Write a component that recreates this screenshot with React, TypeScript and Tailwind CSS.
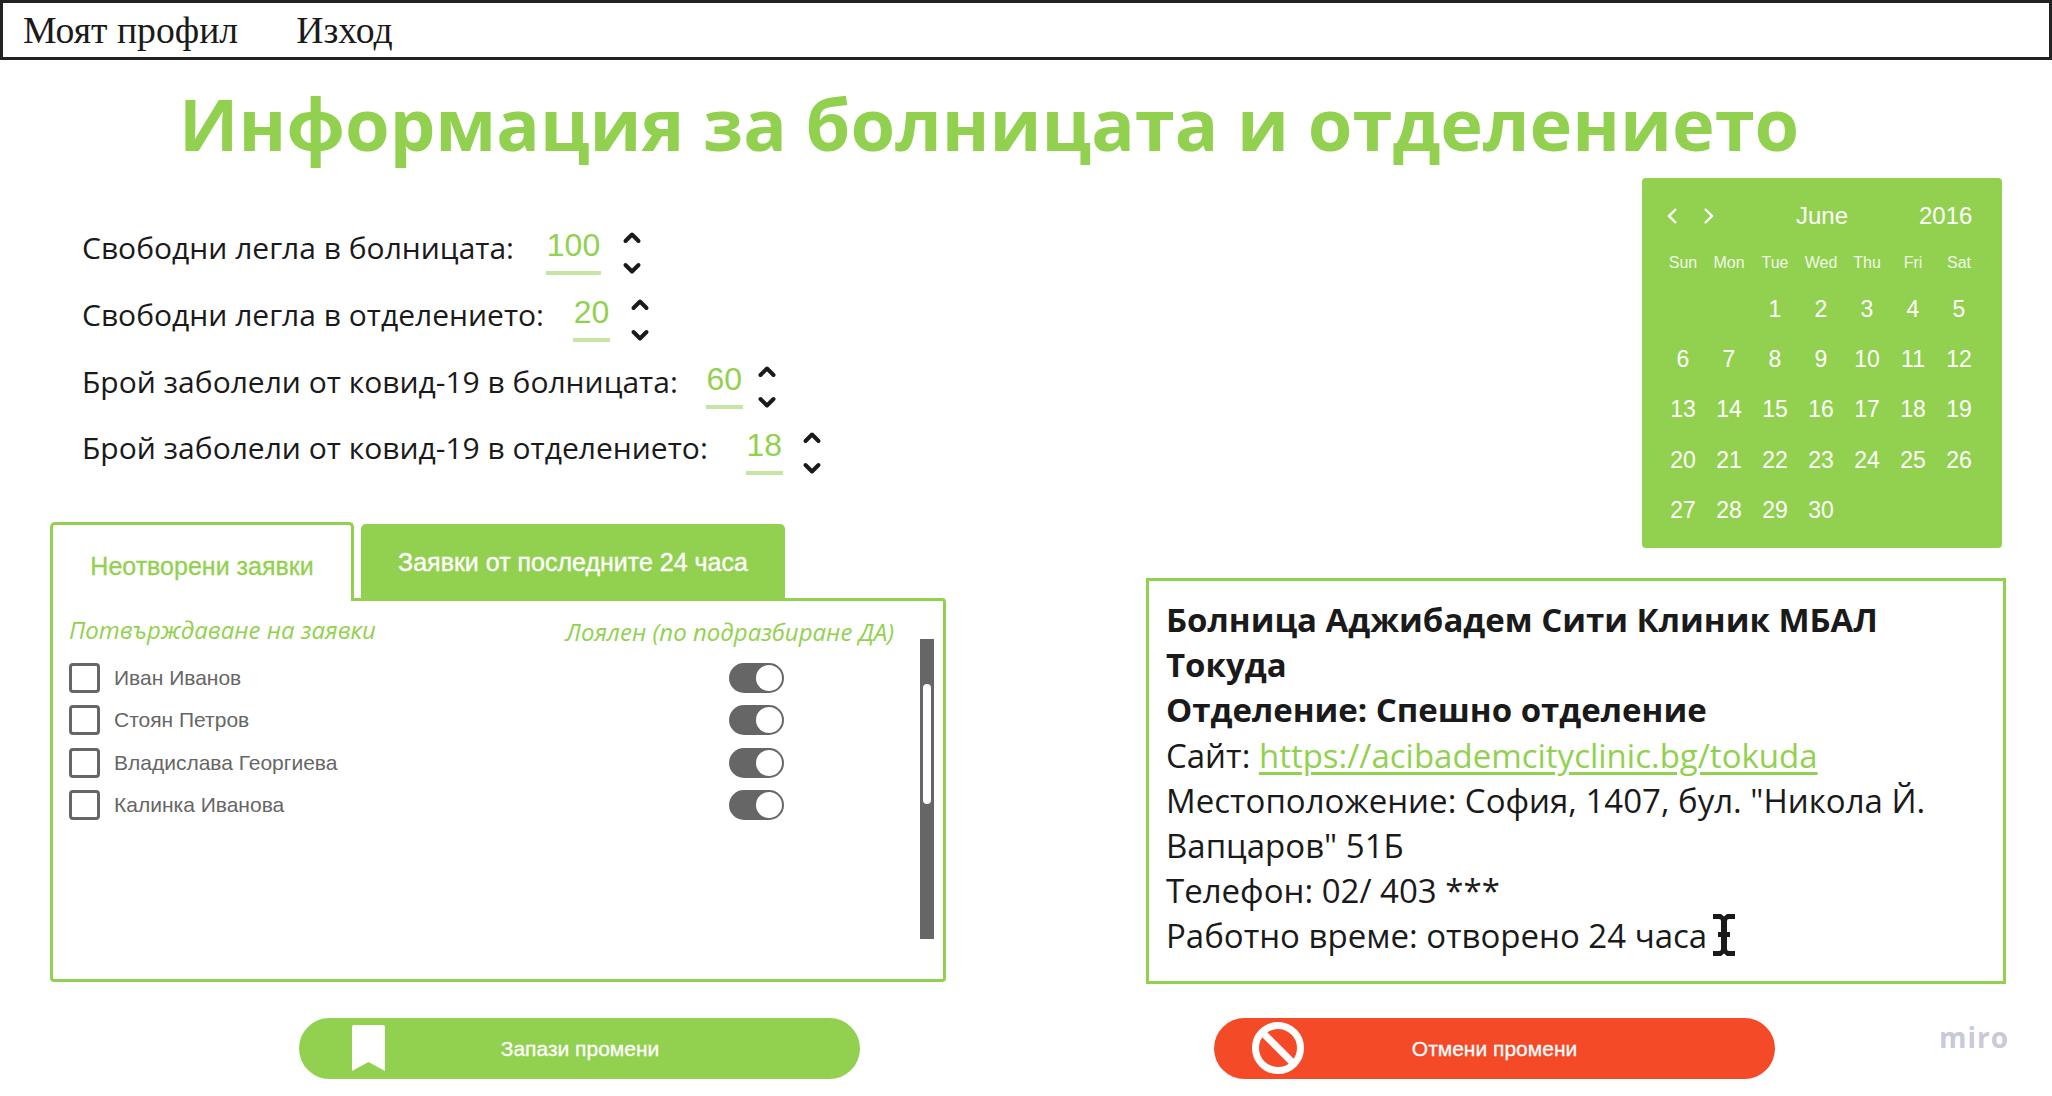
import React from "react";

const rows = [
  { label: "Свободни легла в болницата:", value: "100", rowCls: "h-[66px]", valCls: "ml-[32px] w-[55px]", chevCls: "ml-[21px]" },
  { label: "Свободни легла в отделението:", value: "20", rowCls: "h-[68px]", valCls: "ml-[29px] w-[37px]", chevCls: "ml-[20px]" },
  { label: "Брой заболели от ковид-19 в болницата:", value: "60", rowCls: "h-[66px]", valCls: "ml-[28px] w-[37px]", chevCls: "ml-[14px]" },
  { label: "Брой заболели от ковид-19 в отделението:", value: "18", rowCls: "h-[66px]", valCls: "ml-[38px] w-[37px]", chevCls: "ml-[19px]" },
];

const people = [
  { name: "Иван Иванов", cls: "h-[42px]" },
  { name: "Стоян Петров", cls: "h-[42px]" },
  { name: "Владислава Георгиева", cls: "h-[43px]" },
  { name: "Калинка Иванова", cls: "h-[42px]" },
];

const cal = [
  ["", "", "1", "2", "3", "4", "5"],
  ["6", "7", "8", "9", "10", "11", "12"],
  ["13", "14", "15", "16", "17", "18", "19"],
  ["20", "21", "22", "23", "24", "25", "26"],
  ["27", "28", "29", "30", "", "", ""],
];

function Stepper() {
  return (
    <div className="flex flex-col gap-[18px]">
      <svg width="20" height="13" viewBox="0 0 20 13" fill="none" stroke="#1a1a1a" strokeWidth="4" strokeLinecap="round" strokeLinejoin="round">
        <path d="M3.5 10 L10 3.5 L16.5 10" />
      </svg>
      <svg width="20" height="13" viewBox="0 0 20 13" fill="none" stroke="#1a1a1a" strokeWidth="4" strokeLinecap="round" strokeLinejoin="round">
        <path d="M3.5 3 L10 9.5 L16.5 3" />
      </svg>
    </div>
  );
}

function Calendar() {
  return (
    <div className="w-[360px] h-[370px] bg-[#92d14f] rounded-[4px] mr-[3px] px-[18px] pt-[20px] text-white font-['Liberation_Sans',sans-serif]">
      <div className="flex items-center h-[36px] text-[24px] pl-[5px]">
        <svg width="14" height="20" viewBox="0 0 14 20" fill="none" stroke="white" strokeWidth="2.4" className="mr-[23px]"><path d="M11 3 L4 10 L11 17" /></svg>
        <svg width="14" height="20" viewBox="0 0 14 20" fill="none" stroke="white" strokeWidth="2.4"><path d="M3 3 L10 10 L3 17" /></svg>
        <span className="ml-[76px] w-[60px] text-center">June</span>
        <span className="ml-[67px]">2016</span>
      </div>
      <div className="grid grid-cols-[repeat(7,46px)] mt-[10px] h-[38px] items-center text-center text-[16px] text-[#f0f8e6]">
        {["Sun", "Mon", "Tue", "Wed", "Thu", "Fri", "Sat"].map((d) => <span key={d}>{d}</span>)}
      </div>
      <div className="grid grid-cols-[repeat(7,46px)] auto-rows-[50.25px] items-center text-center text-[23px] mt-[2px]">
        {cal.flat().map((d, i) => <span key={i}>{d}</span>)}
      </div>
    </div>
  );
}

function Tabs() {
  return (
    <div className="w-[896px] h-[460px] flex flex-col font-['Liberation_Sans',sans-serif]">
      <div className="flex items-end h-[79px] relative z-10">
        <div className="w-[304px] h-[79px] border-[3px] border-b-0 border-[#92d14f] rounded-t-[5px] bg-white text-[#92d14f] text-[25px] font-medium flex items-center justify-center pt-[7px] [-webkit-text-stroke:0.3px_#92d14f]">
          Неотворени заявки
        </div>
        <div className="ml-[7px] w-[424px] h-[77px] bg-[#92d14f] text-white text-[25px] rounded-t-[5px] flex items-start justify-center pt-[20px] [-webkit-text-stroke:0.4px_white]">
          Заявки от последните 24 часа
        </div>
      </div>
      <div className="flex-1 -mt-[3px] border-[3px] border-[#92d14f] rounded-[4px] rounded-tl-none pl-[16px] pr-[9px] flex">
        <div className="flex-1">
          <div className="flex justify-between pt-[12px] h-[53px] pr-[26px] font-['Open_Sans',sans-serif] italic text-[24px] text-[#92d14f]">
            <span className="-mt-px">Потвърждаване на заявки</span>
            <span className="mt-px">Лоялен (по подразбиране ДА)</span>
          </div>
          <div className="pt-[3px]">
            {people.map((p) => (
              <div key={p.name} className={`flex items-center ${p.cls}`}>
                <div className="w-[31px] h-[30px] rounded-[4px] border-[3px] border-[#666666] bg-white" />
                <span className="ml-[14px] text-[21px] text-[#666666] w-[615px]">{p.name}</span>
                <div className="w-[55px] h-[30px] rounded-full bg-[#666666] flex items-center justify-end pr-[2px]">
                  <div className="w-[26px] h-[26px] rounded-full bg-white" />
                </div>
              </div>
            ))}
          </div>
        </div>
        <div className="w-[14px] h-[300px] mt-[38px] bg-[#666666] flex justify-center pt-[45px] shrink-0">
          <div className="w-[8px] h-[120px] rounded-full bg-white" />
        </div>
      </div>
    </div>
  );
}

function InfoBox() {
  return (
    <div className="relative w-[860px] h-[406px] mt-[30px] -mr-[1px] border-[3px] border-[#92d14f] pl-[17px] pt-[16px] font-['Open_Sans',sans-serif] text-[33px] leading-[45.2px] text-[#1a1a1a]">
      <div className="font-bold w-[800px]">Болница Аджибадем Сити Клиник МБАЛ Токуда</div>
      <div className="font-bold">Отделение: Спешно отделение</div>
      <div>
        Сайт: <span className="text-[#92d14f] underline decoration-[3px] underline-offset-[4px]">https://acibademcityclinic.bg/tokuda</span>
      </div>
      <div className="w-[800px]">Местоположение: София, 1407, бул. "Никола Й. Вапцаров" 51Б</div>
      <div>Телефон: 02/ 403 ***</div>
      <div className="flex items-center">
        Работно време: отворено 24 часа
        <svg width="24" height="44" viewBox="0 0 24 44" className="ml-[5px] -mt-[2px]" fill="#1a1a1a">
          <path d="M1 1 H9 L12 3.5 L15 1 H23 V6 H17 Q15 6 15 8 V19 H18 V24 H15 V36 Q15 38 17 38 H23 V43 H15 L12 40.5 L9 43 H1 V38 H7 Q9 38 9 36 V24 H6 V19 H9 V8 Q9 6 7 6 H1 Z" />
        </svg>
      </div>
    </div>
  );
}

export default function App() {
  return (
    <div className="w-[2052px] h-[1096px] bg-white overflow-hidden relative font-['Open_Sans',sans-serif]">
      <nav className="h-[60px] border-[3px] border-[#222222] flex items-center pl-[20px] gap-[58px] font-['Liberation_Serif',serif] text-[37.7px] text-[#1a1a1a]">
        <span>Моят профил</span>
        <span>Изход</span>
      </nav>
      <h1 className="pl-[179px] pt-[18px] h-[118px] text-[72.2px] leading-[90px] font-bold text-[#92d14f] whitespace-nowrap">
        Информация за болницата и отделението
      </h1>
      <div className="flex justify-between pl-[50px] pr-[47px]">
        <div className="w-[896px]">
          <div className="h-[344px] pl-[32px] pt-[36px]">
            {rows.map((r) => (
              <div key={r.label} className={`flex items-center ${r.rowCls}`}>
                <span className="text-[30px] text-[#1a1a1a] whitespace-nowrap">{r.label}</span>
                <span className={`${r.valCls} h-[54px] mt-[2px] border-b-[4px] border-[#c6e6a4] text-center text-[32px] leading-[44px] text-[#92d14f] font-['Liberation_Sans',sans-serif] pt-[2px]`}>{r.value}</span>
                <div className={`${r.chevCls} mt-[11px]`}><Stepper /></div>
              </div>
            ))}
          </div>
          <Tabs />
        </div>
        <div className="flex flex-col items-end">
          <Calendar />
          <InfoBox />
        </div>
      </div>
      <div className="flex pl-[299px] mt-[34px] text-white text-[21px] font-['Liberation_Sans',sans-serif] [-webkit-text-stroke:0.3px_white]">
        <button className="w-[561px] h-[61px] rounded-full bg-[#92d14f] relative flex items-center justify-center pl-[1px]">
          <svg width="33" height="46" viewBox="0 0 33 46" className="absolute left-[53px] top-[7px]" fill="white">
            <path d="M2 0 H31 Q33 0 33 2 V46 L16.5 37 L0 46 V2 Q0 0 2 0 Z" />
          </svg>
          Запази промени
        </button>
        <button className="ml-[354px] w-[561px] h-[61px] rounded-full bg-[#f44a27] relative flex items-center justify-center">
          <svg width="54" height="54" viewBox="0 0 54 54" className="absolute left-[37px] top-[3px]" fill="none" stroke="white" strokeWidth="7">
            <circle cx="27" cy="27" r="22.5" />
            <path d="M11 11 L43 43" />
          </svg>
          Отмени промени
        </button>
      </div>
      <span className="absolute left-[1939px] top-[1016px] text-[28px] font-bold tracking-[1px] text-[#c9c9d9] font-['Open_Sans',sans-serif]">miro</span>
    </div>
  );
}
